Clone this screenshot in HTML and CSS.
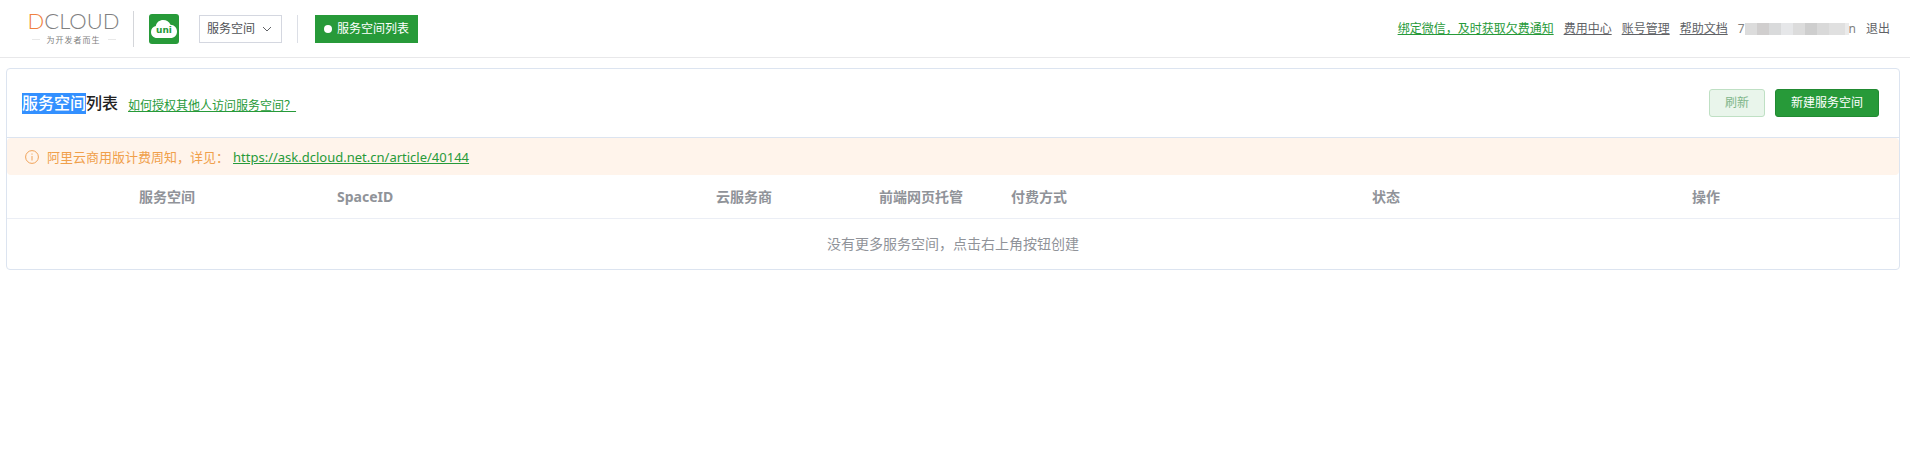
FILE: index.html
```html
<!DOCTYPE html>
<html lang="zh-CN">
<head>
    <meta charset="UTF-8">
    <meta name="viewport" content="width=device-width, initial-scale=1.0">
    <title>服务空间列表</title>
    <link rel="stylesheet" href="styles.css">
</head>
<body>
    <header class="header">
        <a class="logo" href="#">
            <span class="logo-name"><span class="logo-d">D</span>CLOUD</span>
            <span class="logo-slogan">为开发者而生</span>
        </a>
        <a class="uni" href="#">
            <svg width="30" height="30" viewBox="0 0 30 30">
                <rect width="30" height="30" rx="3" fill="#279a39"/>
                <path d="M8 24C4.500 24 2 21.500 2 18C2 14.800 4 12.500 6.800 12C7.500 8.300 10.500 6 14.200 6C17.500 6 20.300 7.800 21.500 10.800C25.300 10.900 28 13.800 28 17.400C28 21.200 25.300 24 21.500 24Z" fill="#fff"/>
                <text x="15" y="19" text-anchor="middle" class="uni-text">uni</text>
            </svg>
        </a>
        <div class="picker">
            <select class="picker-select" aria-label="产品">
                <option>服务空间</option>
            </select>
            <svg class="picker-arrow" width="10" height="6" viewBox="0 0 10 6">
                <path d="M1 1L5 5L9 1" fill="none" stroke="#606266"/>
            </svg>
        </div>
        <nav class="tabs">
            <a class="tab" href="#"><span class="tab-dot"></span>服务空间列表</a>
        </nav>
        <div class="user">
            <a class="link-green" href="#">绑定微信，及时获取欠费通知</a>
            <a href="#">费用中心</a>
            <a href="#">账号管理</a>
            <a href="#">帮助文档</a>
            <span class="account">7<span class="mask"></span>n</span>
            <a class="logout" href="#">退出</a>
        </div>
    </header>

    <main class="card">
        <div class="card-header">
            <h1 class="title"><span class="selected">服务空间</span>列表</h1>
            <a class="help link-green" href="#">如何授权其他人访问服务空间？</a>
            <div class="actions">
                <button class="btn" type="button" disabled>刷新</button>
                <button class="btn btn-primary" type="button">新建服务空间</button>
            </div>
        </div>
        <div class="notice">
            <svg width="14" height="14" viewBox="0 0 14 14">
                <circle cx="7" cy="7" r="6.400" fill="none" stroke="#f0a35a"/>
                <path d="M7 6V10.500M7 3.500V4.700" stroke="#f0a35a"/>
            </svg>
            <span class="notice-text">阿里云商用版计费周知，详见：</span>
            <a class="link-green" href="#">https://ask.dcloud.net.cn/article/40144</a>
        </div>
        <table class="table">
            <colgroup>
                <col class="col-wide">
                <col class="col-wide">
                <col class="col-provider">
                <col class="col-hosting">
                <col class="col-pay">
                <col class="col-status">
                <col class="col-action">
            </colgroup>
            <thead>
                <tr>
                    <th>服务空间</th>
                    <th class="left">SpaceID</th>
                    <th>云服务商</th>
                    <th>前端网页托管</th>
                    <th class="left">付费方式</th>
                    <th>状态</th>
                    <th>操作</th>
                </tr>
            </thead>
            <tbody>
                <tr>
                    <td class="empty" colspan="7">没有更多服务空间，点击右上角按钮创建</td>
                </tr>
            </tbody>
        </table>
    </main>
</body>
</html>
```
FILE: styles.css
```css
:root {
    --green: #279a39;
    --border: #dce4f0;
    --line: #ebeef5;
    --muted: #909399;
    --orange: #f0a04b;
}

* {
    box-sizing: border-box;
}

body {
    margin: 0;
    background: #fff;
    color: #222;
    font-family: "Noto Sans", "Noto Sans CJK SC", sans-serif;
    font-size: 12px;
    line-height: 18px;
}

.header {
    display: flex;
    align-items: center;
    height: 58px;
    padding: 0 20px 0 28px;
    border-bottom: 1px solid #e8e8ea;
}

.logo {
    display: flex;
    flex-direction: column;
    align-items: center;
    width: 106px;
    height: 36px;
    padding-right: 14px;
    border-right: 1px solid #d4d6da;
    color: #808080;
    text-decoration: none;
}

.logo-name {
    font-family: Lato, sans-serif;
    font-size: 22px;
    font-weight: 300;
    line-height: 20px;
}

.logo-d {
    color: #f08040;
}

.logo-slogan {
    display: flex;
    align-items: center;
    gap: 7px;
    font-size: 8px;
    letter-spacing: 1px;
    line-height: 18px;
    white-space: nowrap;
}

.logo-slogan::before,
.logo-slogan::after {
    content: "";
    width: 8px;
    height: 1px;
    background: #e8e8e8;
}

.uni {
    display: flex;
    margin-left: 15px;
}

.uni-text {
    fill: var(--green);
    font-family: "DejaVu Sans", sans-serif;
    font-size: 9px;
    font-weight: 700;
}

.picker {
    position: relative;
    margin-left: 20px;
    padding-right: 15px;
    border-right: 1px solid #dcdfe6;
}

.picker-select {
    display: block;
    width: 83px;
    height: 28px;
    padding: 0 7px;
    border: 1px solid #d4d7e0;
    border-radius: 0;
    background: #fff;
    color: #505256;
    font: inherit;
    appearance: none;
}

.picker-arrow {
    position: absolute;
    top: 11px;
    left: 63px;
    pointer-events: none;
}

.tabs {
    margin-left: 17px;
}

.tab {
    display: flex;
    align-items: center;
    gap: 5px;
    height: 28px;
    padding: 0 9px;
    background: var(--green);
    color: #fff;
    text-decoration: none;
}

.tab-dot {
    width: 8px;
    height: 8px;
    border-radius: 50%;
    background: #fff;
}

.user {
    display: flex;
    gap: 10px;
    margin-left: auto;
    white-space: nowrap;
}

.user a {
    color: #606266;
}

a.link-green,
.user a.link-green {
    color: var(--green);
}

.user .logout {
    text-decoration: none;
}

.account {
    display: flex;
    align-items: center;
    color: #808080;
}

.mask {
    width: 104px;
    height: 12px;
    background: linear-gradient(90deg,
        #dcdcdc 12px, #d0cece 12px 24px, #d9dadb 24px 36px,
        #e6e7e9 36px 48px, #dcdcdc 48px 60px, #cecece 60px 72px,
        #d9d9d9 72px 84px, #e0e0e0 84px 100px, #ebebeb 100px);
}

.card {
    margin: 10px 10px 0 6px;
    border: 1px solid var(--border);
    border-radius: 4px;
}

.card-header {
    display: flex;
    align-items: center;
    height: 69px;
    padding: 0 20px 0 15px;
    border-bottom: 1px solid var(--border);
}

.title {
    margin: 0;
    font-size: 16px;
    font-weight: 500;
    line-height: 21px;
}

.selected {
    display: inline-block;
    background: #3390ff;
    color: #fff;
}

.help {
    margin: 6px 0 0 10px;
}

.actions {
    display: flex;
    gap: 10px;
    margin-left: auto;
}

.btn {
    height: 28px;
    padding: 0 15px;
    border: 1px solid #bfe0c4;
    border-radius: 3px;
    background: #e9f5eb;
    color: #7fb58a;
    font: inherit;
}

.btn-primary {
    border-color: #218a32;
    background: var(--green);
    color: #fff;
}

.notice {
    display: flex;
    align-items: center;
    height: 37px;
    padding: 0 18px;
    border-radius: 4px;
    background: #fff4eb;
    color: var(--orange);
    font-size: 13px;
}

.notice-text {
    margin: 0 4px 0 8px;
}

.table {
    width: 100%;
    border-collapse: collapse;
    table-layout: fixed;
    color: var(--muted);
    font-size: 14px;
    line-height: 23px;
}

.table th {
    padding: 10px;
    border-bottom: 1px solid var(--line);
    font-weight: 700;
    text-align: center;
}

.table .left {
    text-align: left;
}

.table .empty {
    padding: 13px 10px 14px;
    text-align: center;
}

.col-wide {
    width: 320px;
}

.col-provider {
    width: 194px;
}

.col-hosting {
    width: 160px;
}

.col-pay {
    width: 258px;
}

.col-status {
    width: 254px;
}

.col-action {
    width: 386px;
}
```
